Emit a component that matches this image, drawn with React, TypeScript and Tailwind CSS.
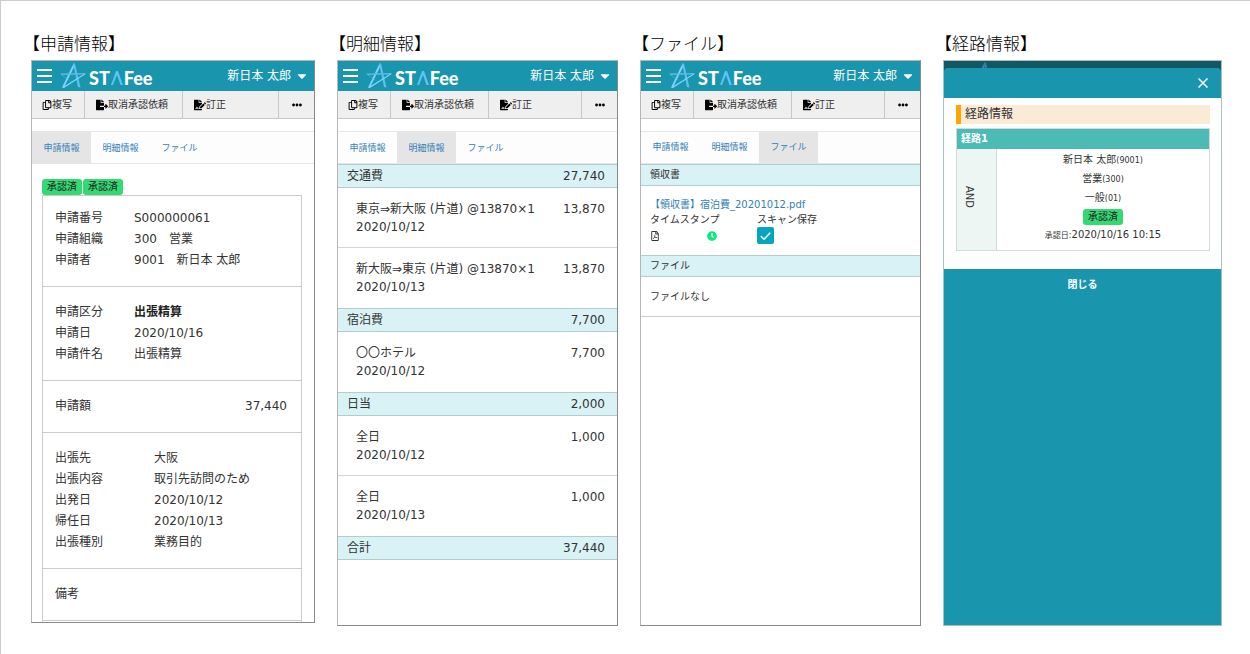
import type { ReactNode } from 'react'
import { FaCaretDown, FaClock, FaEllipsisH, FaFileExport, FaFileSignature, FaRegCopy, FaRegFilePdf } from 'react-icons/fa'

const TABS = ['申請情報', '明細情報', 'ファイル']

const Star = ({ className }: { className?: string }) => (
  <svg viewBox="0 0 26 28" className={className} aria-hidden="true">
    <path d="M13.500 1.500 L2 25.500 L4 25.500 L14 5 Z" fill="#7fd3ff" />
    <path d="M13 1.500 L18 25 L20.500 25.500 L15 1.500 Z" fill="#5cc0f2" />
    <path d="M0 11.500 L25.500 11 L24.500 12.500 L2 13 Z" fill="#5cb8e4" />
    <path d="M25.500 11 L2 25.500 L4 26 L25 12.500 Z" fill="#7fd3ff" />
    <path d="M0 11.500 L18 24 L20.500 25.500 L2 13.500 Z" fill="#5cc0f2" />
  </svg>
)

const Logo = () => (
  <div className="flex items-center" aria-label="STAFee">
    <Star className="h-7 w-[26px]" />
    <div className="ml-[3px] flex items-baseline gap-px pt-1 font-[family-name:Lato,sans-serif] text-lg leading-6 font-black text-white">
      <span>ST</span>
      <svg viewBox="0 0 12 14" className="h-3.5 w-3" aria-hidden="true">
        <path d="M0 14 L5 0 L7 0 L12 14 L9.500 14 L6 4 L2 14 Z" fill="#5cc3f2" />
      </svg>
      <span>Fee</span>
    </div>
  </div>
)

const Header = () => (
  <header className="flex h-[30px] items-center bg-[#1a95ae] px-[5px] text-white">
    <button type="button" aria-label="メニュー" className="mr-2">
      <svg viewBox="0 0 15 14" className="h-3.5 w-[15px]" aria-hidden="true">
        <path d="M0 1H15M0 7H15M0 13H15" stroke="white" strokeWidth="1.800" />
      </svg>
    </button>
    <Logo />
    <button type="button" className="ml-auto flex items-center gap-1 text-xs">
      新日本 太郎
      <FaCaretDown className="size-3.5" />
    </button>
  </header>
)

const Toolbar = () => (
  <div className="flex h-7 border-b border-[#c8c8c8] bg-[#efefef] text-[10px] text-[#333]">
    <button type="button" className="flex w-[53px] items-center border-r border-[#c8c8c8] pl-2.5">
      <FaRegCopy className="size-2.5 text-black" />
      複写
    </button>
    <button type="button" className="flex w-[98px] items-center border-r border-[#c8c8c8] pl-[11px]">
      <FaFileExport className="size-3 text-black" />
      取消承認依頼
    </button>
    <button type="button" className="flex flex-1 items-center border-r border-[#c8c8c8] pl-[11px]">
      <FaFileSignature className="size-3 text-black" />
      訂正
    </button>
    <button type="button" aria-label="その他" className="flex w-[35px] items-center justify-center">
      <FaEllipsisH className="size-2.5 text-black" />
    </button>
  </div>
)

const Tabs = ({ active }: { active: string }) => (
  <nav className="mt-3 flex h-[33px] border-y border-[#e6e6e6] bg-[#fdfdfd] text-[9px] text-[#337fb5]">
    {TABS.map((tab) => (
      <a
        key={tab}
        href="#"
        className={tab === active ? 'flex w-[59px] items-center justify-center bg-[#e5e5e5]' : 'flex w-[59px] items-center justify-center'}
      >
        {tab}
      </a>
    ))}
  </nav>
)

const Column = ({ title, children }: { title: string; children: ReactNode }) => (
  <section className="flex min-w-0 flex-col">
    <h2 className="-ml-2 pb-1 text-[17px] leading-6 font-light text-black">{title}</h2>
    {children}
  </section>
)

const Screen = ({ active, className, children }: { active: string; className: string; children: ReactNode }) => (
  <div className={`overflow-hidden border border-t-[#b5b5b5] border-r-[#8a8a8a] border-b-[#8a8a8a] border-l-[#b5b5b5] bg-white ${className}`}>
    <Header />
    <Toolbar />
    <Tabs active={active} />
    {children}
  </div>
)

const Badge = () => (
  <span className="inline-block rounded-[3px] bg-[#35d974] px-[5px] text-[10px] leading-4 text-[#222]">承認済</span>
)

type Entry = { label: string; value: string; bold?: boolean }

const Fields = ({ rows, wide }: { rows: Entry[]; wide?: boolean }) => (
  <dl className="border-b border-[#ccc] py-[15px] pl-3 first:pt-3">
    {rows.map(({ label, value, bold }) => (
      <div key={label} className="flex leading-[21px]">
        <dt className={wide ? 'w-[99px]' : 'w-[79px]'}>{label}</dt>
        <dd className={bold ? 'font-bold text-[#222]' : ''}>{value}</dd>
      </div>
    ))}
  </dl>
)

const RequestScreen = () => (
  <Screen active="申請情報" className="text-xs">
    <div className="pt-[15px] pr-3 pl-2.5">
      <div className="flex gap-px">
        <Badge />
        <Badge />
      </div>
      <div className="border border-b-0 border-[#ccc] pb-px">
        <Fields
          rows={[
            { label: '申請番号', value: 'S000000061' },
            { label: '申請組織', value: '300　営業' },
            { label: '申請者', value: '9001　新日本 太郎' },
          ]}
        />
        <Fields
          rows={[
            { label: '申請区分', value: '出張精算', bold: true },
            { label: '申請日', value: '2020/10/16' },
            { label: '申請件名', value: '出張精算' },
          ]}
        />
        <dl className="flex justify-between border-b border-[#ccc] py-[15px] pr-3.5 pl-3 leading-[21px]">
          <dt>申請額</dt>
          <dd>37,440</dd>
        </dl>
        <Fields
          wide
          rows={[
            { label: '出張先', value: '大阪' },
            { label: '出張内容', value: '取引先訪問のため' },
            { label: '出発日', value: '2020/10/12' },
            { label: '帰任日', value: '2020/10/13' },
            { label: '出張種別', value: '業務目的' },
          ]}
        />
        <Fields rows={[{ label: '備考', value: '' }]} />
      </div>
    </div>
  </Screen>
)

const GROUPS = [
  {
    name: '交通費',
    total: '27,740',
    items: [
      { name: '東京⇒新大阪 (片道) @13870×1', date: '2020/10/12', amount: '13,870' },
      { name: '新大阪⇒東京 (片道) @13870×1', date: '2020/10/13', amount: '13,870' },
    ],
  },
  { name: '宿泊費', total: '7,700', items: [{ name: '〇〇ホテル', date: '2020/10/12', amount: '7,700' }] },
  {
    name: '日当',
    total: '2,000',
    items: [
      { name: '全日', date: '2020/10/12', amount: '1,000' },
      { name: '全日', date: '2020/10/13', amount: '1,000' },
    ],
  },
  { name: '合計', total: '37,440', items: [] },
]

const DetailScreen = () => (
  <Screen active="明細情報" className="flex-1 text-xs">
    {GROUPS.map((group) => (
      <div key={group.name}>
        <div className="flex h-6 items-center justify-between border-y border-[#b4cccd] bg-[#d8f2f5] pr-3 pl-[9px]">
          <h3>{group.name}</h3>
          <span>{group.total}</span>
        </div>
        <ul className="divide-y divide-[#d4d4d4]">
          {group.items.map((item) => (
            <li key={item.date} className="flex h-[60px] justify-between pt-3 pr-3 pl-[18px] leading-[18px]">
              <div>
                <p>{item.name}</p>
                <p>{item.date}</p>
              </div>
              <span>{item.amount}</span>
            </li>
          ))}
        </ul>
      </div>
    ))}
  </Screen>
)

const FileHeading = ({ children }: { children: ReactNode }) => (
  <h3 className="border-y border-[#b4cccd] bg-[#d8f2f5] pl-[9px] leading-5">{children}</h3>
)

const FileScreen = () => (
  <Screen active="ファイル" className="flex-1 text-[10px]">
    <FileHeading>領収書</FileHeading>
    <div className="pt-[11px] pb-[11px] pl-[9px] leading-[15px]">
      <a href="#" className="text-[#337fb5]">
        【領収書】宿泊費_20201012.pdf
      </a>
      <div className="grid grid-cols-[57px_50px_auto] items-center">
        <span className="col-span-2">タイムスタンプ</span>
        <label htmlFor="scan">スキャン保存</label>
        <FaRegFilePdf className="size-2.5" />
        <FaClock className="size-2.5 text-[#0be881]" />
        <div className="relative size-[17px]">
          <input id="scan" type="checkbox" defaultChecked className="block size-full appearance-none rounded-xs bg-[#05a5c0]" />
          <svg viewBox="0 0 18 18" className="pointer-events-none absolute inset-0" aria-hidden="true">
            <path d="M4 9.500 L7.500 13 L14 6" fill="none" stroke="white" strokeWidth="1.600" />
          </svg>
        </div>
      </div>
    </div>
    <FileHeading>ファイル</FileHeading>
    <p className="border-b border-[#ccc] py-3 pl-[9px] leading-[15px]">ファイルなし</p>
  </Screen>
)

const RouteScreen = () => (
  <div className="flex flex-1 flex-col overflow-hidden border border-[#a8bfc4] bg-[#145764] text-[10px]">
    <div className="h-[7px] overflow-hidden pl-[27px]">
      <Star className="h-7 w-[26px] opacity-40" />
    </div>
    <div className="flex-1 rounded-t bg-[#1a95ae]">
      <div className="flex h-[30px] items-center justify-end pr-[13px]">
        <button type="button" aria-label="閉じる">
          <svg viewBox="0 0 10 10" className="size-2.5" aria-hidden="true">
            <path d="M0.500 0.500 L9.500 9.500 M9.500 0.500 L0.500 9.500" stroke="white" strokeWidth="1.500" />
          </svg>
        </button>
      </div>
      <div className="bg-white pt-[7px] pr-[11px] pb-[18px] pl-3">
        <h3 className="border-l-[5px] border-[#ffa500] bg-[#faebd7] pl-1 text-xs leading-[19px]">経路情報</h3>
        <table className="mt-1 w-full border-collapse border border-[#d0dcdc]">
          <thead>
            <tr>
              <th colSpan={2} className="bg-[#4dbbb5] pl-1 text-left leading-5 text-white">
                経路1
              </th>
            </tr>
          </thead>
          <tbody>
            <tr>
              <td className="w-10 border-r border-[#d0dcdc] bg-[#edf6f3] pr-4 text-center">
                <span className="inline-block leading-3 [writing-mode:vertical-rl]">AND</span>
              </td>
              <td className="pt-0.5 pb-[5px] text-center leading-[18px]">
                <p>
                  新日本 太郎<span className="text-[8px]">(9001)</span>
                </p>
                <p>
                  営業<span className="text-[8px]">(300)</span>
                </p>
                <p>
                  一般<span className="text-[8px]">(01)</span>
                </p>
                <p>
                  <Badge />
                </p>
                <p>
                  <span className="text-[8px]">承認日:</span>2020/10/16 10:15
                </p>
              </td>
            </tr>
          </tbody>
        </table>
      </div>
      <button type="button" className="h-[30px] w-full font-bold text-white">
        閉じる
      </button>
    </div>
  </div>
)

export default function App() {
  return (
    <main
      lang="ja"
      className="grid min-h-screen grid-cols-[284fr_281fr_281fr_279fr] gap-[22px] border-t border-l border-[#ccc] bg-white pt-[31px] pr-7 pb-7 pl-[30px] font-['DejaVu_Sans','Noto_Sans_CJK_JP',sans-serif] text-[#333]"
    >
      <Column title="【申請情報】">
        <RequestScreen />
      </Column>
      <Column title="【明細情報】">
        <DetailScreen />
      </Column>
      <Column title="【ファイル】">
        <FileScreen />
      </Column>
      <Column title="【経路情報】">
        <RouteScreen />
      </Column>
    </main>
  )
}
